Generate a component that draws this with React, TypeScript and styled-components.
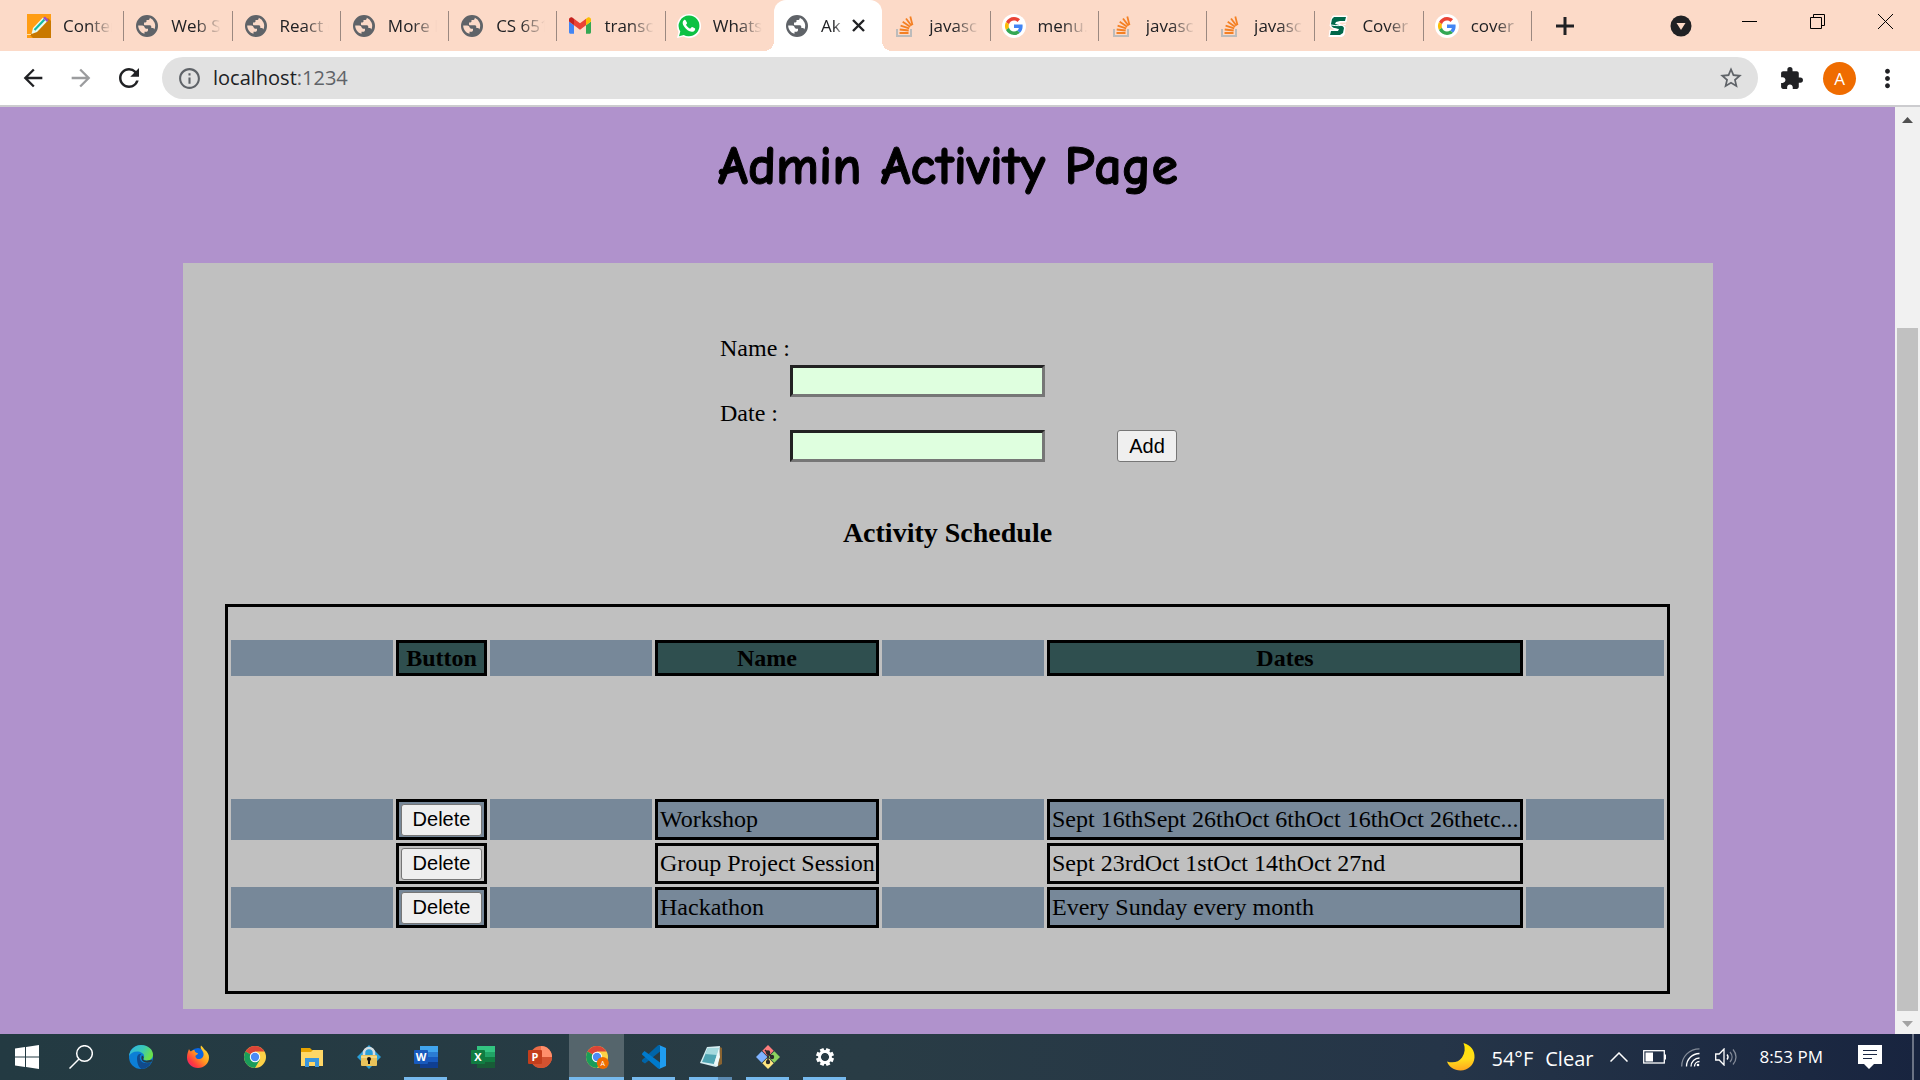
import React from "react";
import styled, { createGlobalStyle, css } from "styled-components";
import { MdExtension, MdStarBorder, MdRefresh, MdInfoOutline, MdArrowBack, MdArrowForward, MdMoreVert } from "react-icons/md";

const sans = `"Open Sans", "Noto Sans", sans-serif`;
const serif = `"Liberation Serif", "Times New Roman", serif`;

const GlobalStyle = createGlobalStyle`
  *, *::before, *::after { box-sizing: border-box; }
  html, body { margin: 0; padding: 0; overflow: hidden; }
  button { font: inherit; color: inherit; cursor: pointer; }
  svg { display: block; flex: none; }
`;

const Screen = styled.div`
  display: flex;
  flex-direction: column;
  height: 100vh;
  font-family: ${sans};
`;

/* Browser chrome */

const TabStrip = styled.header`
  display: flex;
  height: 51px;
  flex: none;
  padding-left: 16px;
  background: #fcdac8;
  color: #202124;
`;

const Tabs = styled.nav`
  display: flex;
  flex: 1;
  min-width: 0;
`;

const TabItem = styled.div<{ $active?: boolean; $noRule?: boolean }>`
  position: relative;
  display: flex;
  align-items: center;
  flex: 1 1 0;
  min-width: 0;
  padding: 0 12px 0 11px;

  ${(p) =>
    !p.$active &&
    !p.$noRule &&
    css`
      &::after {
        content: "";
        position: absolute;
        right: 0;
        top: 11px;
        width: 1px;
        height: 30px;
        background: #9b8880;
      }
    `}

  ${(p) =>
    p.$active &&
    css`
      background: #fff;
      border-radius: 12px 12px 0 0;
      &::before,
      &::after {
        content: "";
        position: absolute;
        bottom: 0;
        width: 10px;
        height: 10px;
      }
      &::before {
        left: -10px;
        background: radial-gradient(circle at 0 0, transparent 10px, #fff 10px);
      }
      &::after {
        right: -10px;
        background: radial-gradient(circle at 100% 0, transparent 10px, #fff 10px);
      }
    `}
`;

const TabButton = styled.button`
  display: flex;
  align-items: center;
  gap: 12px;
  flex: 1;
  min-width: 0;
  padding: 0;
  border: 0;
  background: none;
  font-size: 17px;
  line-height: 24px;
  text-align: left;
`;

const Favicon = styled.span`
  display: flex;
  align-items: center;
  justify-content: center;
  width: 24px;
  height: 24px;
  flex: none;
  color: #5f6368;
`;

const TabTitle = styled.span`
  flex: 1;
  min-width: 0;
  overflow: hidden;
  white-space: nowrap;
  mask-image: linear-gradient(to right, #000 50%, transparent 100%);
`;

const IconButton = styled.button<{ $w?: number; $color?: string }>`
  display: flex;
  align-items: center;
  justify-content: center;
  width: ${(p) => p.$w ?? 48}px;
  flex: none;
  padding: 0;
  border: 0;
  background: none;
  color: ${(p) => p.$color ?? "#202124"};
`;

const StripControls = styled.div`
  display: flex;
  justify-content: space-between;
  width: 388px;
  flex: none;
  padding: 0 1px 0 9px;
`;

const WindowButtons = styled.div`
  display: flex;
  height: 43px;
`;

const RightControls = styled.div`
  display: flex;
`;

const Toolbar = styled.div`
  display: flex;
  align-items: center;
  flex: none;
  height: 56px;
  padding: 0 9px;
  border-bottom: 2px solid #cccccf;
  background: #fff;
`;

const AddressBar = styled.div`
  display: flex;
  align-items: center;
  flex: 1;
  min-width: 0;
  height: 42px;
  margin: 0 9px;
  padding: 0 3px;
  border-radius: 21px;
  background: #e1e1e1;
`;

const AddressText = styled.a`
  flex: 1;
  color: #202124;
  font-size: 20px;
  line-height: 26px;
  text-decoration: none;
`;

const Port = styled.span`
  color: #5f6368;
`;

const Avatar = styled.button`
  display: flex;
  align-items: center;
  justify-content: center;
  width: 33px;
  height: 33px;
  margin: 0 7px 0 8px;
  padding: 0;
  border: 0;
  border-radius: 50%;
  background: #ef6c00;
  color: #fff;
  font-size: 17px;
`;

/* Page */

const Viewport = styled.div`
  display: flex;
  flex: 1;
  min-height: 0;
  background: #b092cc;
`;

const Page = styled.main`
  flex: 1;
  min-width: 0;
  overflow: hidden;
  padding: 0 182px 0 183px;
  color: #000;
  font-family: ${serif};
  font-size: 24px;
  line-height: 27px;
`;

const PageTitle = styled.h1`
  margin: 0;
  padding: 26px 0 62px;
  font-family: "Comic Sans MS", "Comic Neue", ${sans};
  font-size: 54px;
  line-height: 68px;
  font-weight: 700;
  text-align: center;
  -webkit-text-stroke: 1px #000;
`;

const Panel = styled.section`
  padding: 72px 43px 15px 42px;
  background: #c0c0c0;
`;

const Entry = styled.form`
  display: flex;
  justify-content: center;
  padding-left: 2px;
`;

const Fields = styled.div`
  display: grid;
  grid-template-columns: 70px 255px;
  grid-template-rows: 27px 32px 27px 32px;
  row-gap: 3px;
`;

const FieldLabel = styled.label`
  grid-column: 1 / 3;
`;

const Field = styled.input`
  grid-column: 2;
  width: 100%;
  padding: 2px 3px;
  border: 3px solid;
  border-color: #222 #767676 #767676 #222;
  border-radius: 0;
  outline: 0;
  background: #dfffdf;
  font: 20px "Liberation Sans", Arial, sans-serif;
`;

const PushButton = styled.button`
  height: 32px;
  padding: 0 11px 2px;
  border: 1px solid #767676;
  border-radius: 3px;
  background: #efefef;
  color: #000;
  font: 20px/28px "Liberation Sans", Arial, sans-serif;
`;

const AddButton = styled(PushButton)`
  align-self: flex-end;
  width: 60px;
  margin-left: 72px;
  padding: 0;
`;

const ScheduleTitle = styled.h3`
  margin: 55px 0;
  font-size: 28px;
  line-height: 32px;
  text-align: center;
`;

const Schedule = styled.table`
  width: 100%;
  table-layout: fixed;
  border: 3px solid #000;
  border-collapse: separate;
  border-spacing: 3px;
`;

const Col = styled.col<{ $w?: number }>`
  width: ${(p) => (p.$w ? `${p.$w}px` : "auto")};
`;

const Row = styled.tr<{ $h: number; $filled?: boolean }>`
  height: ${(p) => p.$h}px;
  > * {
    background: ${(p) => (p.$filled ? "#778899" : "transparent")};
  }
`;

const Gap = styled.td`
  padding: 0;
`;

const Head = styled.th`
  && {
    background: #2f4f4f;
  }
  padding: 0 1px;
  border: 3px solid #000;
  font-weight: 700;
`;

const Cell = styled.td`
  padding: 0 1px 0 2px;
  border: 3px solid #000;
  white-space: nowrap;
`;

const ActionCell = styled.td`
  padding: 1px;
  border: 3px solid #000;
  line-height: 0;
  text-align: center;
`;

/* Scroll bar */

const ScrollBar = styled.aside`
  display: flex;
  flex-direction: column;
  width: 25px;
  flex: none;
  padding: 0 2px;
  background: #f1f1f1;
`;

const ScrollArrow = styled.button<{ $color: string }>`
  display: flex;
  align-items: center;
  justify-content: center;
  height: 23px;
  padding: 3px 0 0;
  border: 0;
  background: none;
  color: ${(p) => p.$color};
`;

const ScrollSpace = styled.div`
  flex: 198;
`;

const ScrollThumb = styled.div`
  flex: 683;
  background: #c1c1c1;
`;

/* Task bar */

const TaskBar = styled.footer`
  display: flex;
  align-items: stretch;
  justify-content: space-between;
  flex: none;
  height: 46px;
  background: linear-gradient(to right, #233a42 0%, #293c45 45%, #253548 75%, #18243f 100%);
  color: #fff;
`;

const Launchers = styled.div`
  display: flex;
`;

const Pinned = styled.div`
  display: flex;
  gap: 2px;
  padding-left: 5px;
`;

const TaskButton = styled.button<{ $w?: number; $open?: boolean; $active?: boolean; $stacked?: boolean }>`
  display: flex;
  flex-direction: column;
  align-items: center;
  width: ${(p) => p.$w ?? 55}px;
  padding: 11px 0 0;
  border: 0;
  background: ${(p) => (p.$active ? "#55656c" : "none")};

  &::after {
    content: "";
    width: ${(p) => (p.$active ? "55px" : "43px")};
    height: 3px;
    margin-top: auto;
    background: ${(p) =>
      p.$stacked
        ? "linear-gradient(to right, #76b9ed 29px, #5b89b0 29px)"
        : p.$open || p.$active
          ? "#76b9ed"
          : "transparent"};
  }
`;

const Tray = styled.div`
  display: flex;
  align-items: center;
`;

const TrayText = styled.button<{ $size: number }>`
  display: flex;
  align-items: center;
  gap: 12px;
  padding: 0;
  border: 0;
  background: none;
  font-size: ${(p) => p.$size}px;
  line-height: 26px;
  white-space: nowrap;
`;

const Weather = styled(TrayText)`
  margin-left: 17px;
  padding-top: 3px;
`;

const TrayIcons = styled.div`
  display: flex;
  align-items: center;
  gap: 15px;
  margin: 0 22px 0 17px;
`;

const Notices = styled(IconButton)`
  width: 24px;
  margin-left: 35px;
`;

const ShowDesktop = styled.button`
  align-self: stretch;
  width: 8px;
  margin-left: 30px;
  padding: 0;
  border: 0;
  border-left: 2px solid #6b7385;
  background: none;
`;

/* Icons */

const GlobeIcon = () => (
  <svg width="22" height="22" viewBox="0 0 22 22">
    <path
      fillRule="evenodd"
      fill="#5f6368"
      d="M11 0a11 11 0 1 1 0 22 11 11 0 0 1 0-22zM2.200 10.500c0 4 2.600 7.300 6.300 8.300V16.800h1.700c1.200 0 1.800-.8 1.800-1.800v-1.200h-1.800c-.8 0-1.300-.5-1.500-1.200-.3-1.300-1.200-2.100-2.500-2.100zM13.800 2.700c0 1.500-.7 2.300-2 2.300h-1.300v1.300c0 .7-.4 1.200-1.200 1.200H8v1.700c0 .6.4 1 1 1h4.500c1.200 0 1.800.6 1.800 1.600v1.300h1.300c.9 0 1.500.6 1.700 1.500a8.800 8.800 0 0 0-4.500-11.900z"
    />
  </svg>
);

const NotesIcon = () => (
  <svg width="24" height="24" viewBox="0 0 24 24">
    <rect width="24" height="24" fill="#ff9d14" />
    <path d="M3 21 21 4l3 3v17H6z" fill="#c97800" />
    <path d="m4.500 20 1.500-6L16 3.500 20.500 7 10 18z" fill="#e9fbf3" />
    <path d="M7.500 16 17.500 5.500" stroke="#12b8a6" strokeWidth="2.200" />
    <path d="m16 4 2-1.500L21.500 6 20 8z" fill="#9b4fc4" />
    <path d="M0 20.500h4" stroke="#ffe0a0" />
  </svg>
);

const GmailIcon = () => (
  <svg width="22" height="17" viewBox="52 42 88 66">
    <path fill="#4285f4" d="M58 108h14V74L52 59v43c0 3.32 2.69 6 6 6" />
    <path fill="#34a853" d="M120 108h14c3.32 0 6-2.69 6-6V59l-20 15" />
    <path fill="#fbbc04" d="M120 48v26l20-15v-8c0-7.42-8.47-11.65-14.4-7.2" />
    <path fill="#ea4335" d="M72 74V48l24 18 24-18v26L96 92" />
    <path fill="#c5221f" d="M52 51v8l20 15V48l-5.6-4.2c-5.94-4.45-14.4-.22-14.4 7.2" />
  </svg>
);

const WhatsAppIcon = () => (
  <svg width="24" height="24" viewBox="0 0 24 24">
    <path d="M12 0a12 12 0 1 1-5.6 22.6L0 24l1.5-6.2A12 12 0 0 1 12 0z" fill="#fff" />
    <path d="M12 1.5a10.4 10.4 0 1 1-5.2 19.4L2 22.2l1.3-4.7A10.4 10.4 0 0 1 12 1.5z" fill="#0dc143" />
    <path d="M8.6 6.3c-.5-.9-1-.7-1.5-.4-2 1.500-1.800 4.100 0 6.700 2.100 3.200 5.200 5.400 8.300 5.100 1.800-.2 2.900-1.500 2.800-3 0-.5-2.800-1.800-3.200-1.700-.6.100-1.200 1.600-1.700 1.600-1 0-4.100-2.900-4.200-3.900 0-.6 1-1 1-1.700z" fill="#fff" />
  </svg>
);

const StackIcon = () => (
  <svg width="20" height="24" viewBox="0 0 20 24" fill="none">
    <path d="M2 15v7h14v-7" stroke="#bcbbbb" strokeWidth="2" />
    <path d="M4.500 19h9M4.700 15.500l9 1M5.600 11.600l8.600 2.800M7.700 7.800l7.400 5M11 4.500l5.500 7.300M15.300 2.500l2.200 8.600" stroke="#f48024" strokeWidth="1.800" />
  </svg>
);

const GoogleIcon = () => (
  <svg width="24" height="24" viewBox="0 0 24 24">
    <circle cx="12" cy="12" r="12" fill="#fff" />
    <g transform="translate(3 3) scale(.375)">
      <path fill="#EA4335" d="M24 9.500c3.540 0 6.710 1.220 9.210 3.600l6.850-6.850C35.900 2.380 30.470 0 24 0 14.620 0 6.510 5.380 2.560 13.220l7.980 6.190C12.430 13.720 17.740 9.500 24 9.500z" />
      <path fill="#4285F4" d="M46.980 24.550c0-1.570-.15-3.090-.38-4.550H24v9.020h12.940c-.58 2.960-2.260 5.480-4.780 7.180l7.730 6c4.510-4.180 7.090-10.360 7.090-17.650z" />
      <path fill="#FBBC05" d="M10.530 28.590a14.500 14.500 0 0 1 0-9.180l-7.980-6.190a24 24 0 0 0 0 21.560z" />
      <path fill="#34A853" d="M24 48c6.480 0 11.930-2.130 15.890-5.810l-7.730-6c-2.150 1.450-4.920 2.300-8.160 2.300-6.260 0-11.570-4.220-13.470-9.910l-7.980 6.190C6.510 42.620 14.620 48 24 48z" />
    </g>
  </svg>
);

const SpartanIcon = () => (
  <svg width="20" height="22" viewBox="0 0 20 22">
    <path d="M5 1h14l-1 6h-5l-3 1 7 4-1 8-3 2H1l1-7 6 1-6-5 1-6z" fill="#fff" stroke="#fff" />
    <path d="M6 2h12l-1 4h-5L8 7l-1 2c4 1 8 1 9 4l-1 5-3 2H2l1-4h7l1-2c-4-1-8-1-8-5l1-5z" fill="#00684a" />
    <path d="M3 10c6 1 10 1 15-1" stroke="#fff" fill="none" />
  </svg>
);

const WindowsIcon = () => (
  <svg width="24" height="24" viewBox="0 0 24 24" fill="#fff">
    <path d="M0 3.400 10 2v9.500H0zM11 1.900 24 0v11.500H11zM0 12.500h10V22L0 20.600zM11 12.500h13V24l-13-1.900z" />
  </svg>
);

const SearchIcon = () => (
  <svg width="24" height="24" viewBox="0 0 24 24" fill="none" stroke="#fff" strokeWidth="1.500">
    <circle cx="15.500" cy="8.500" r="7.800" />
    <path d="M10 14 .5 23.500" />
  </svg>
);

const EdgeIcon = () => (
  <svg width="24" height="24" viewBox="0 0 24 24">
    <defs>
      <linearGradient id="edgeTop" x1="0" y1="0" x2="1" y2=".4">
        <stop offset="0" stopColor="#2fb2e8" />
        <stop offset=".6" stopColor="#3bc9b4" />
        <stop offset="1" stopColor="#6be04b" />
      </linearGradient>
    </defs>
    <circle cx="12" cy="12" r="12" fill="#0c7fd6" />
    <path d="M0 11C1 4 6 0 12 0c7 0 12 4.500 12 9.500 0 4-3 6-6 6-2.500 0-4-.8-3.500-1.900C16.500 10.500 14 7 9 6.500 5 6.200 1.500 8 0 11z" fill="url(#edgeTop)" />
    <path d="M8 13c0-3 2-4.500 4.500-4.300C9.800 10.500 10 17 16 18c3 .5 5-.3 6.500-1-2 4-5.500 7-10 7C9.500 22.500 8 18 8 13z" fill="#114a8b" />
    <path d="M13 10.500c2 1 2 2 1.300 3.300-.6 1.200 1 1.900 3.200 1.900l6-1.200-1 2.500c-4 1.600-9 .8-10-3-.3-1.300 0-2.500.5-3.500z" fill="#263b43" />
  </svg>
);

const FirefoxIcon = () => (
  <svg width="24" height="24" viewBox="0 0 24 24">
    <defs>
      <linearGradient id="fox" x1="1" y1="0" x2="0" y2="1">
        <stop offset="0" stopColor="#fff23a" />
        <stop offset=".45" stopColor="#ff9a1f" />
        <stop offset=".75" stopColor="#ff3a3f" />
        <stop offset="1" stopColor="#e31587" />
      </linearGradient>
    </defs>
    <circle cx="12" cy="12" r="9" fill="#0a66e0" />
    <path d="M3 4c.5 1 1 2 2 2.500C6 5.500 7 5 8.500 5c0 1.500 1 3 3.500 3.300-.3 1.500-2 1.700-2.600 2.600 0 2 2 3.600 4.600 3 2.500-.5 4-3 3.500-5.500C17 5 13.500 4 15 .5c2 1.500 2.500 3 4 4.500 2.500 2 4 4.500 4 7.500 0 6-5 10.500-11 10.500S1 18.500 1 12.500C1 9 2 7 3 4z" fill="url(#fox)" />
  </svg>
);

const ChromeIcon = ({ badge = false }: { badge?: boolean }) => (
  <svg width="24" height="24" viewBox="0 0 24 24">
    <circle cx="12" cy="12" r="11" fill="#fdd147" />
    <path d="M12 12 2.500 6.500A11 11 0 0 1 21.500 6.500H12z" fill="#db4437" />
    <path d="M12 12 2.500 6.500A11 11 0 0 0 12 23l5-8.500z" fill="#1a9c5a" />
    <circle cx="12" cy="12" r="5.200" fill="#fff" />
    <circle cx="12" cy="12" r="4.200" fill="#4c8bf5" />
    {badge && (
      <>
        <circle cx="17.800" cy="18" r="6" fill="#ef6c00" />
        <text x="17.800" y="20.800" fontSize="7" fill="#fff" textAnchor="middle" fontFamily="Open Sans">A</text>
      </>
    )}
  </svg>
);

const FolderIcon = () => (
  <svg width="24" height="24" viewBox="0 0 24 24">
    <path d="M1 3h9l2 2h11v6H1z" fill="#e8a300" />
    <path d="M1 7h10l2-2h10v16H1z" fill="#ffd766" />
    <path d="M5 13h14v9h-4v-5H9v5H5z" fill="#3a96dd" />
  </svg>
);

const LockIcon = () => (
  <svg width="24" height="24" viewBox="0 0 24 24">
    <path d="M12 0 24 12 12 24 0 12z" fill="#2a9fd8" />
    <path d="M7 12V8a5 5 0 0 1 10 0v4" fill="none" stroke="#d6dde0" strokeWidth="2.500" />
    <rect x="4" y="10" width="16" height="11" rx="1" fill="#e8c25a" />
    <path d="M4 12h16" stroke="#fff0a8" />
    <circle cx="12" cy="14" r="2" fill="#111" />
    <path d="M11 14h2v5h-2z" fill="#111" />
  </svg>
);

const OfficeIcon = ({ letter, tones }: { letter: string; tones: string[] }) => (
  <svg width="24" height="24" viewBox="0 0 24 24">
    <path d="M6 1h18v6H6z" fill={tones[0]} />
    <path d="M6 7h18v5H6z" fill={tones[1]} />
    <path d="M6 12h18v5H6z" fill={tones[2]} />
    <path d="M6 17h18v6H6z" fill={tones[3]} />
    <rect y="5" width="14" height="14" rx="1" fill={tones[4]} />
    <text x="7" y="16" fontSize="11" fontWeight="700" fill="#fff" textAnchor="middle" fontFamily="Open Sans">{letter}</text>
  </svg>
);

const PowerPointIcon = () => (
  <svg width="24" height="24" viewBox="0 0 24 24">
    <circle cx="13" cy="12" r="11" fill="#ed6c47" />
    <path d="M13 1a11 11 0 0 1 11 11H13z" fill="#ff8f6b" />
    <path d="M2 12h22a11 11 0 0 1-22 0z" fill="#d35230" />
    <rect y="5" width="14" height="14" rx="1" fill="#c43e1c" />
    <text x="7" y="16" fontSize="11" fontWeight="700" fill="#fff" textAnchor="middle" fontFamily="Open Sans">P</text>
  </svg>
);

const CodeIcon = () => (
  <svg width="24" height="24" viewBox="0 0 24 24">
    <path d="M18 0v6.500L3 18.500 0 16.500V15L16 .3z" fill="#0065a9" />
    <path d="M0 8.500 2.500 6 18 17.500V24l-2-.5L0 9.500z" fill="#007acc" />
    <path d="M17 0l7 3v18l-7 3c1-.5 1-1 1-2V2c0-1 0-1.500-1-2z" fill="#1f9cf0" />
  </svg>
);

const NotepadIcon = () => (
  <svg width="24" height="24" viewBox="0 0 24 24">
    <path d="m21 2 2 1v16l-4 2z" fill="#8a6431" />
    <path d="M8 2 21 1l-2 20-2 1L1 18z" fill="#d6edf1" />
    <path d="M9 3h11l-5 16L3 17z" fill="#4fa4b2" />
    <path d="M9 3h11l-2 7L6 9z" fill="#a5d9de" />
    <path d="m20 3-5 16 3 2 3-9z" fill="#eef8f8" />
  </svg>
);

const GitIcon = () => (
  <svg width="24" height="24" viewBox="0 0 24 24">
    <path d="m12 0 5.700 5.700L12 11.400 6.300 5.700z" fill="#ff7d7d" />
    <path d="m5.700 6.300 5.700 5.700-5.700 5.700L0 12z" fill="#80b3ff" />
    <path d="m18.300 6.300 5.700 5.700-5.700 5.700-5.700-5.700z" fill="#8dd35f" />
    <path d="m12 12.600 5.700 5.700L12 24l-5.700-5.700z" fill="#ffe680" />
    <path d="M9 5l3 3v9M12 8l4 4" fill="none" stroke="#2b2b2b" strokeWidth="1.500" />
    <g fill="#2b2b2b">
      <circle cx="12" cy="7.500" r="2.200" />
      <circle cx="12" cy="17" r="2.200" />
      <circle cx="16" cy="12" r="2.200" />
    </g>
  </svg>
);

const GearIcon = () => (
  <svg width="24" height="24" viewBox="0 0 24 24">
    <g fill="#fff">
      {[0, 45, 90, 135, 180, 225, 270, 315].map((a) => (
        <rect key={a} x="10" y="3" width="4" height="5" transform={`rotate(${a + 22} 12 12)`} />
      ))}
    </g>
    <circle cx="12" cy="12" r="5.600" fill="none" stroke="#fff" strokeWidth="2.600" />
  </svg>
);

const MoonIcon = () => (
  <svg width="28" height="28" viewBox="0 0 28 28">
    <defs>
      <linearGradient id="moon" x1=".5" y1="0" x2=".6" y2="1">
        <stop offset="0" stopColor="#ffe600" />
        <stop offset=".6" stopColor="#ffdc1c" />
        <stop offset="1" stopColor="#ffa51f" />
      </linearGradient>
    </defs>
    <path d="M16.500 0C24 2 28 8 27.500 14.500 27 22 21 27.500 13.500 27.500 7 27.500 2 24 0 18.500c6 2 12 .5 15-4C18 10 18.500 5 16.500 0z" fill="url(#moon)" />
  </svg>
);

const ChevronUpIcon = () => (
  <svg width="18" height="10" viewBox="0 0 18 10" fill="none" stroke="#fff" strokeWidth="1.500">
    <path d="m.5 9.500 8.500-8.500 8.500 8.500" />
  </svg>
);

const BatteryIcon = () => (
  <svg width="23" height="14" viewBox="0 0 23 14">
    <rect x=".7" y=".7" width="20.600" height="12.300" fill="none" stroke="#fff" strokeWidth="1.300" />
    <path d="M2.500 2.500H10v9H2.500zM21.500 4.500H23v5h-1.500z" fill="#fff" />
  </svg>
);

const WifiIcon = () => (
  <svg width="19" height="19" viewBox="0 0 19 19" fill="none" stroke="#fff" strokeWidth="1.300">
    <path d="M.7 18.500C.7 8.500 8.500.8 18.500.8" opacity=".45" />
    <path d="M5.500 18.500c0-7.200 5.800-13 13-13M10 18.500c0-4.700 3.800-8.500 8.500-8.500" />
    <circle cx="17" cy="17" r="1.300" fill="#fff" stroke="none" />
    <path d="M13.500 18.500c0-2.800 2.200-5 5-5" />
  </svg>
);

const VolumeIcon = () => (
  <svg width="22" height="18" viewBox="0 0 22 18" fill="none" stroke="#fff" strokeWidth="1.300">
    <path d="M.7 6h3.500L9 1v16l-4.800-5H.7z" />
    <path d="M12 6.500c1.300 1.500 1.300 3.500 0 5" />
    <path d="M15 4c2.700 3 2.700 7 0 10M18 1.500c4 4.500 4 10.500 0 15" opacity=".45" />
  </svg>
);

const NoticeIcon = () => (
  <svg width="24" height="24" viewBox="0 0 24 24">
    <path d="M0 0h24v19H16l-5 5-5-5H0z" fill="#fff" />
    <path d="M5 5.500h14M5 9.500h14M5 13.500h9" stroke="#1a2744" strokeWidth="1.200" />
  </svg>
);

const tabs: { title: string; icon: React.ReactNode; active?: boolean }[] = [
  { title: "Conten", icon: <NotesIcon /> },
  { title: "Web S", icon: <GlobeIcon /> },
  { title: "React (", icon: <GlobeIcon /> },
  { title: "More I", icon: <GlobeIcon /> },
  { title: "CS 651", icon: <GlobeIcon /> },
  { title: "transc", icon: <GmailIcon /> },
  { title: "Whats", icon: <WhatsAppIcon /> },
  { title: "Ak", icon: <GlobeIcon />, active: true },
  { title: "javasc", icon: <StackIcon /> },
  { title: "menu.", icon: <GoogleIcon /> },
  { title: "javasc", icon: <StackIcon /> },
  { title: "javasc", icon: <StackIcon /> },
  { title: "Cover", icon: <SpartanIcon /> },
  { title: "cover", icon: <GoogleIcon /> },
];

const activities = [
  { name: "Workshop", dates: ["Sept 16th", "Sept 26th", "Oct 6th", "Oct 16th", "Oct 26th", "etc..."] },
  { name: "Group Project Session", dates: ["Sept 23rd", "Oct 1st", "Oct 14th", "Oct 27nd"] },
  { name: "Hackathon", dates: ["Every Sunday every month"] },
];

const apps: { name: string; icon: React.ReactNode; open?: boolean; active?: boolean; stacked?: boolean }[] = [
  { name: "Edge", icon: <EdgeIcon /> },
  { name: "Firefox", icon: <FirefoxIcon /> },
  { name: "Chrome", icon: <ChromeIcon /> },
  { name: "Explorer", icon: <FolderIcon /> },
  { name: "Vault", icon: <LockIcon /> },
  { name: "Word", icon: <OfficeIcon letter="W" tones={["#41a5ee", "#2b7cd3", "#185abd", "#103f91", "#185abd"]} />, open: true },
  { name: "Excel", icon: <OfficeIcon letter="X" tones={["#33c481", "#21a366", "#107c41", "#185c37", "#107c41"]} /> },
  { name: "PowerPoint", icon: <PowerPointIcon /> },
  { name: "Chrome profile", icon: <ChromeIcon badge />, active: true },
  { name: "Code", icon: <CodeIcon />, open: true },
  { name: "Notepad", icon: <NotepadIcon />, open: true, stacked: true },
  { name: "Git", icon: <GitIcon />, open: true },
  { name: "Settings", icon: <GearIcon />, open: true },
];

function Browser() {
  return (
    <>
      <TabStrip>
        <Tabs>
          {tabs.map((tab, i) => (
            <TabItem key={i} $active={tab.active} $noRule={tabs[i + 1]?.active}>
              <TabButton>
                <Favicon>{tab.icon}</Favicon>
                <TabTitle>{tab.title}</TabTitle>
              </TabButton>
              {tab.active && (
                <IconButton $w={24} aria-label="Close tab">
                  <svg width="13" height="13" viewBox="0 0 13 13" stroke="#202124" strokeWidth="2.400">
                    <path d="m1 1 11 11M12 1 1 12" />
                  </svg>
                </IconButton>
              )}
            </TabItem>
          ))}
        </Tabs>
        <StripControls>
          <IconButton aria-label="New tab">
            <svg width="18" height="18" viewBox="0 0 18 18" stroke="#202124" strokeWidth="3">
              <path d="M9 0v18M0 9h18" />
            </svg>
          </IconButton>
          <RightControls>
            <IconButton $w={68} aria-label="Search tabs">
              <svg width="22" height="22" viewBox="0 0 22 22">
                <circle cx="11" cy="11" r="10.500" fill="#202124" />
                <path d="M6.500 8h9L11 15z" fill="#fcdac8" />
              </svg>
            </IconButton>
            <WindowButtons>
              <IconButton $w={68} aria-label="Minimize">
                <svg width="15" height="15" viewBox="0 0 15 15" stroke="#000">
                  <path d="M0 7.500h15" />
                </svg>
              </IconButton>
              <IconButton $w={68} aria-label="Restore">
                <svg width="15" height="15" viewBox="0 0 15 15" fill="none" stroke="#000">
                  <path d="M.5 3.500h11v11H.5zM3.500 3.500v-3h11v11h-3" />
                </svg>
              </IconButton>
              <IconButton $w={68} aria-label="Close window">
                <svg width="15" height="15" viewBox="0 0 15 15" stroke="#000">
                  <path d="m0 0 15 15M15 0 0 15" />
                </svg>
              </IconButton>
            </WindowButtons>
          </RightControls>
        </StripControls>
      </TabStrip>
      <Toolbar>
        <IconButton aria-label="Back"><MdArrowBack size={28} /></IconButton>
        <IconButton $color="#9b9c9e" aria-label="Forward"><MdArrowForward size={28} /></IconButton>
        <IconButton aria-label="Reload"><MdRefresh size={30} /></IconButton>
        <AddressBar>
          <IconButton $color="#5f6368" aria-label="Site information"><MdInfoOutline size={25} /></IconButton>
          <AddressText href="#top">localhost<Port>:1234</Port></AddressText>
          <IconButton $color="#5f6368" aria-label="Bookmark"><MdStarBorder size={26} /></IconButton>
        </AddressBar>
        <IconButton aria-label="Extensions"><MdExtension size={25} /></IconButton>
        <Avatar>A</Avatar>
        <IconButton aria-label="Menu"><MdMoreVert size={29} /></IconButton>
      </Toolbar>
    </>
  );
}

function ActivityPage() {
  return (
    <Page>
      <PageTitle>Admin Activity Page</PageTitle>
      <Panel>
        <Entry onSubmit={(e) => e.preventDefault()}>
          <Fields>
            <FieldLabel htmlFor="name">Name :</FieldLabel>
            <Field id="name" type="text" />
            <FieldLabel htmlFor="date">Date :</FieldLabel>
            <Field id="date" type="text" />
          </Fields>
          <AddButton type="submit">Add</AddButton>
        </Entry>
        <ScheduleTitle>Activity Schedule</ScheduleTitle>
        <Schedule>
          <colgroup>
            <Col $w={162} />
            <Col $w={91} />
            <Col $w={162} />
            <Col $w={224} />
            <Col $w={162} />
            <Col $w={476} />
            <Col />
          </colgroup>
          <thead>
            <Row $h={27}><Gap colSpan={7} /></Row>
            <Row $h={36} $filled>
              <Gap />
              <Head>Button</Head>
              <Gap />
              <Head>Name</Head>
              <Gap />
              <Head>Dates</Head>
              <Gap />
            </Row>
            <Row $h={117}><Gap colSpan={7} /></Row>
          </thead>
          <tbody>
            {activities.map((a, i) => (
              <Row key={a.name} $h={41} $filled={i % 2 === 0}>
                <Gap />
                <ActionCell><PushButton>Delete</PushButton></ActionCell>
                <Gap />
                <Cell>{a.name}</Cell>
                <Gap />
                <Cell>{a.dates.join("")}</Cell>
                <Gap />
              </Row>
            ))}
            <Row $h={57}><Gap colSpan={7} /></Row>
          </tbody>
        </Schedule>
      </Panel>
    </Page>
  );
}

export default function App() {
  return (
    <Screen>
      <GlobalStyle />
      <Browser />
      <Viewport>
        <ActivityPage />
        <ScrollBar>
          <ScrollArrow $color="#505050" aria-label="Scroll up">
            <svg width="11" height="6" viewBox="0 0 11 6" fill="currentColor"><path d="M5.500 0 11 6H0z" /></svg>
          </ScrollArrow>
          <ScrollSpace />
          <ScrollThumb />
          <ScrollArrow $color="#a3a3a3" aria-label="Scroll down">
            <svg width="11" height="6" viewBox="0 0 11 6" fill="currentColor"><path d="M0 0h11L5.500 6z" /></svg>
          </ScrollArrow>
        </ScrollBar>
      </Viewport>
      <TaskBar>
        <Launchers>
          <TaskButton $w={54} aria-label="Start"><WindowsIcon /></TaskButton>
          <TaskButton $w={54} aria-label="Search"><SearchIcon /></TaskButton>
          <Pinned>
            {apps.map((app) => (
              <TaskButton key={app.name} aria-label={app.name} $open={app.open} $active={app.active} $stacked={app.stacked}>
                {app.icon}
              </TaskButton>
            ))}
          </Pinned>
        </Launchers>
        <Tray>
          <MoonIcon />
          <Weather $size={20}><span>54°F</span><span>Clear</span></Weather>
          <TrayIcons>
            <ChevronUpIcon />
            <BatteryIcon />
            <WifiIcon />
            <VolumeIcon />
          </TrayIcons>
          <TrayText $size={17}>8:53 PM</TrayText>
          <Notices aria-label="Notifications"><NoticeIcon /></Notices>
          <ShowDesktop aria-label="Show desktop" />
        </Tray>
      </TaskBar>
    </Screen>
  );
}
